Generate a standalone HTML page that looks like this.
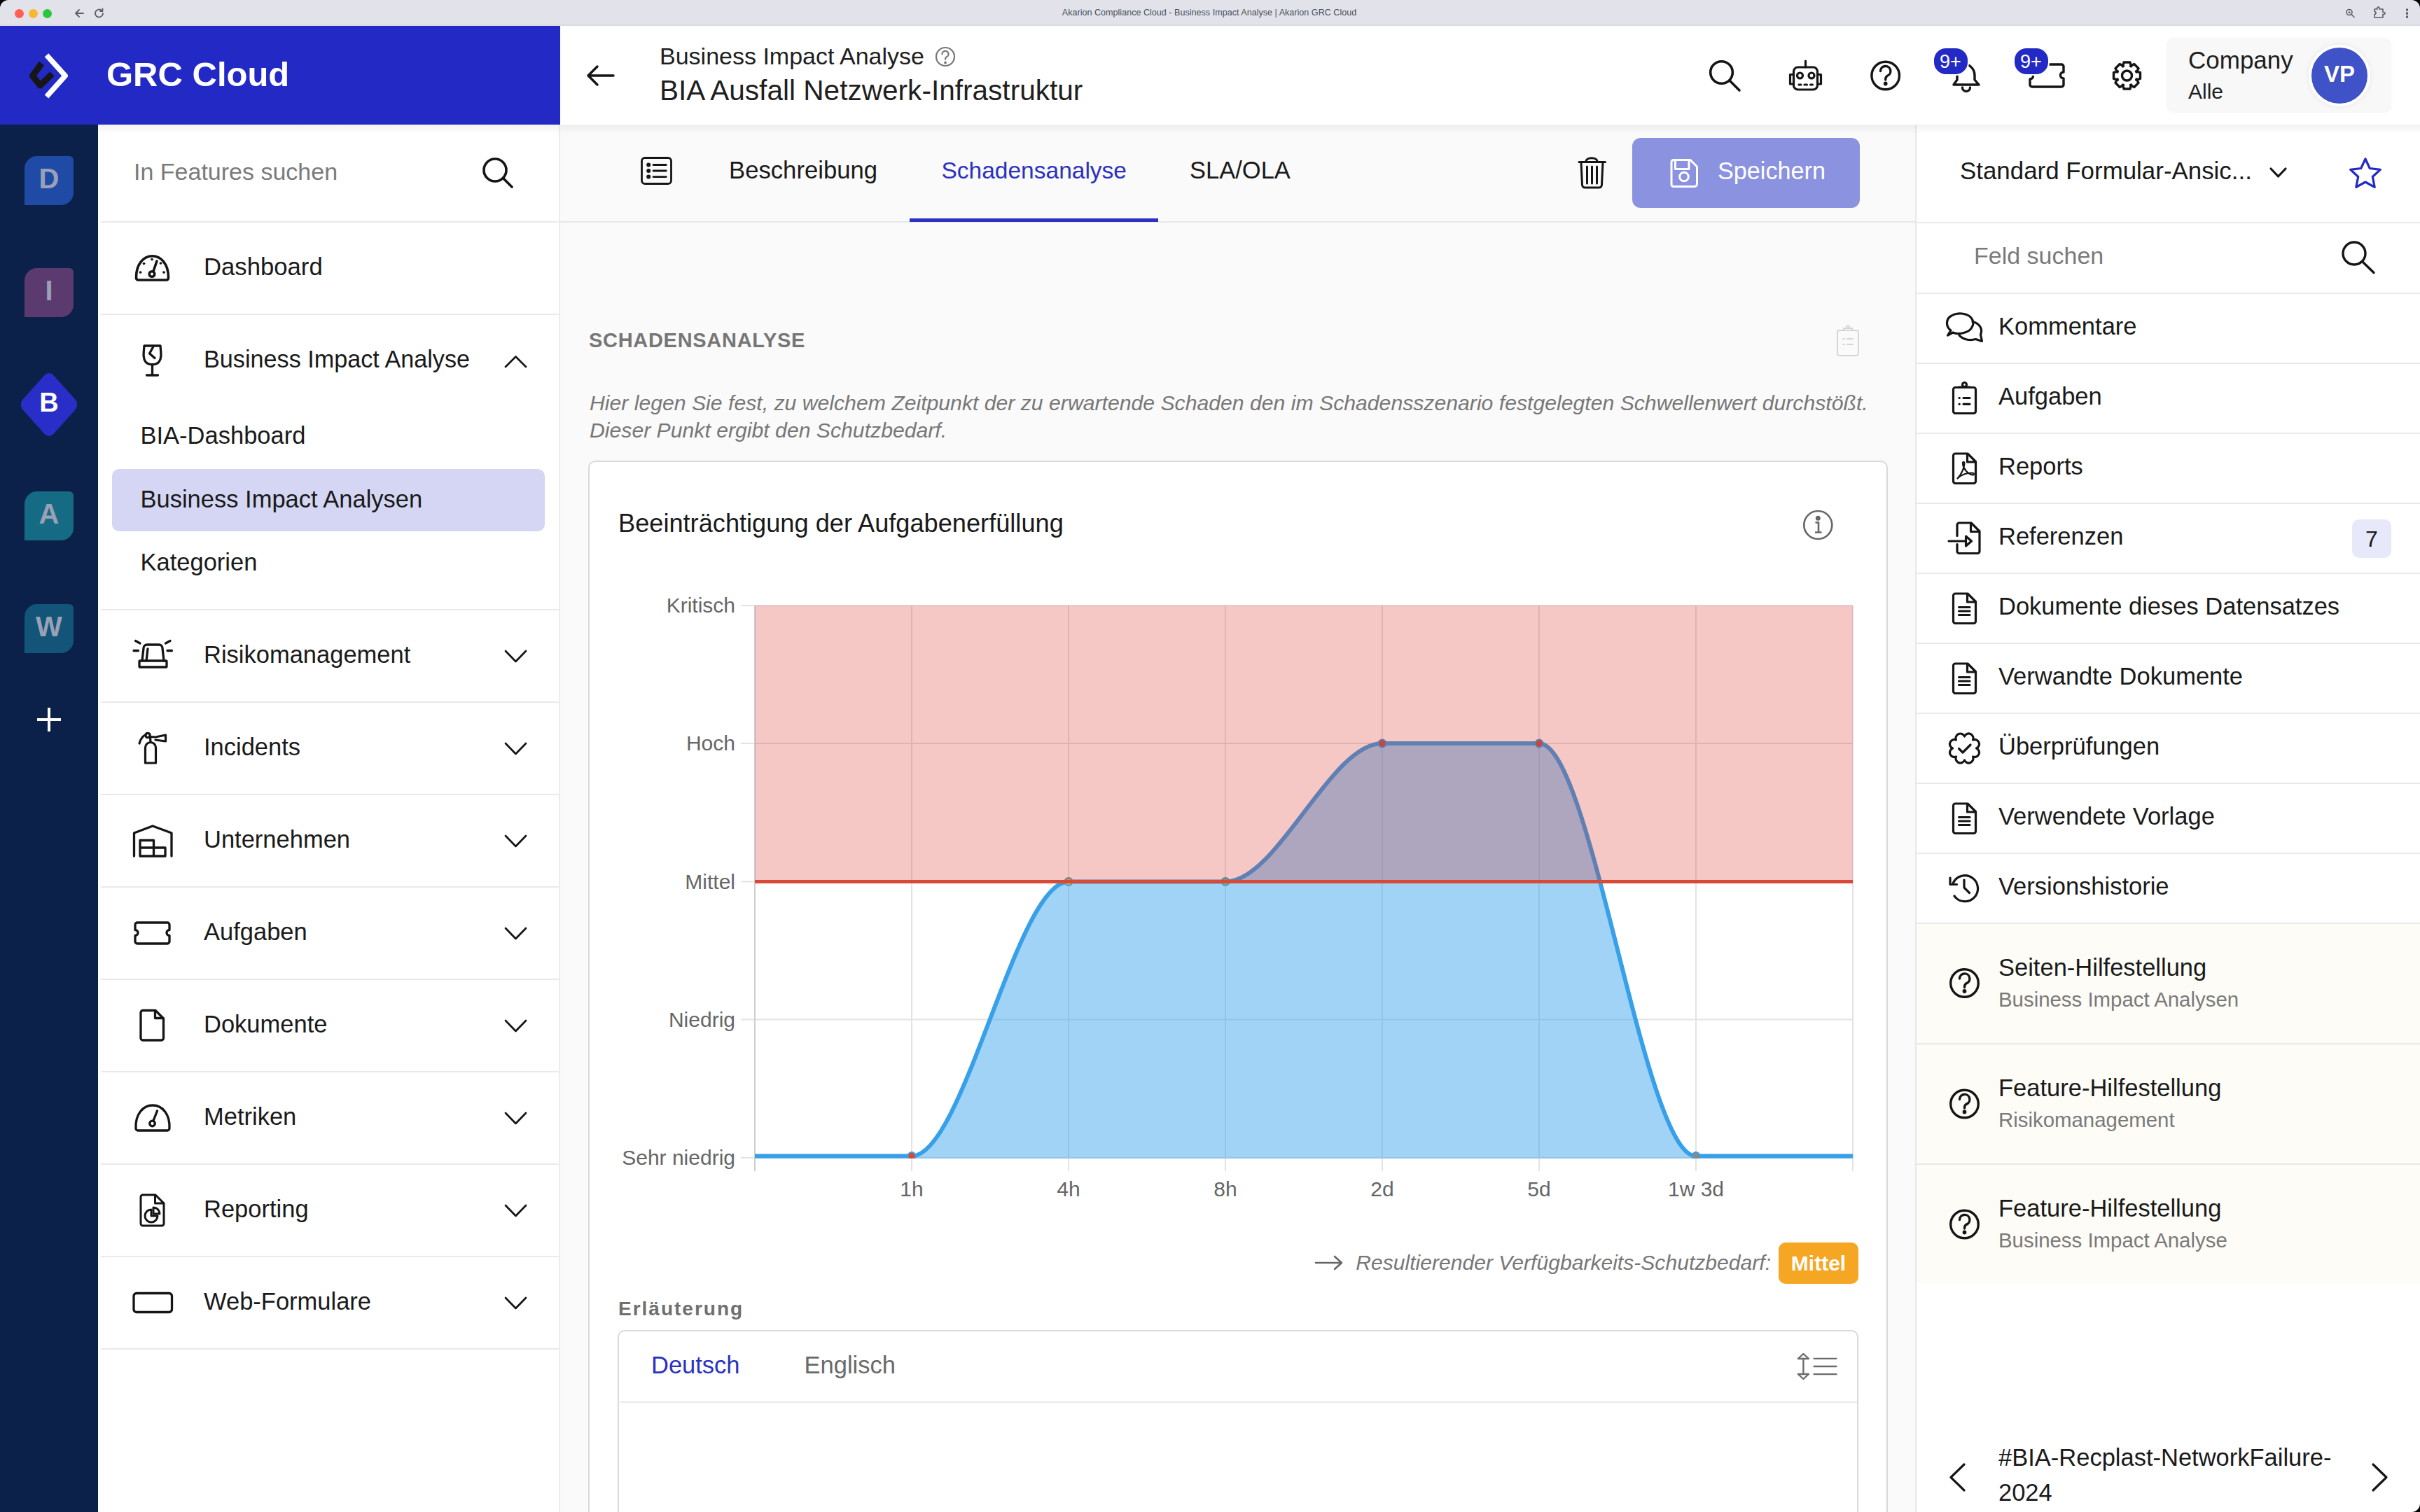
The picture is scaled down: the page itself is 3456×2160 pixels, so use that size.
<!DOCTYPE html>
<html><head><meta charset="utf-8"><title>GRC Cloud</title>
<style>
html,body{margin:0;padding:0;width:3456px;height:2160px;overflow:hidden;background:#f8f8f8;}
body{position:relative;font-family:"Liberation Sans",sans-serif;}
svg{display:block}
</style></head><body>
<div style="position:absolute;left:0px;top:0px;width:3456px;height:35px;background:#e2e3ea;"></div>
<div style="position:absolute;left:0px;top:35px;width:3456px;height:2px;background:#d9dae2;"></div>
<div style="position:absolute;left:20.5px;top:12.5px;width:13px;height:13px;border-radius:50%;background:#fe5f57"></div>
<div style="position:absolute;left:40.5px;top:12.5px;width:13px;height:13px;border-radius:50%;background:#f7b731"></div>
<div style="position:absolute;left:60.5px;top:12.5px;width:13px;height:13px;border-radius:50%;background:#2ac640"></div>
<div style="position:absolute;left:1427.0px;width:600px;text-align:center;top:12.3px;font-size:12.6px;line-height:1;color:#4b4e58;font-weight:400;font-style:normal;letter-spacing:0px;white-space:nowrap;">Akarion Compliance Cloud - Business Impact Analyse | Akarion GRC Cloud</div>
<div style="position:absolute;left:0px;top:37px;width:800px;height:141px;background:#2329c5;"></div>
<div style="position:absolute;left:152.0px;top:81.5px;font-size:49px;line-height:1;color:#ffffff;font-weight:700;font-style:normal;letter-spacing:0px;white-space:nowrap;">GRC Cloud</div>
<div style="position:absolute;left:800px;top:37px;width:2656px;height:141px;background:#ffffff;"></div>
<div style="position:absolute;left:942.0px;top:63.2px;font-size:34px;line-height:1;color:#1f1f1f;font-weight:400;font-style:normal;letter-spacing:0px;white-space:nowrap;">Business Impact Analyse</div>
<div style="position:absolute;left:942.0px;top:108.6px;font-size:40.6px;line-height:1;color:#1f1f1f;font-weight:400;font-style:normal;letter-spacing:0px;white-space:nowrap;">BIA Ausfall Netzwerk-Infrastruktur</div>
<div style="position:absolute;left:3094px;top:54px;width:321px;height:107px;background:#f8f8f9;border-radius:10px;box-shadow:0 0 5px rgba(0,0,0,0.025);"></div>
<div style="position:absolute;left:3125.0px;top:67.9px;font-size:35px;line-height:1;color:#1f1f1f;font-weight:400;font-style:normal;letter-spacing:0px;white-space:nowrap;">Company</div>
<div style="position:absolute;left:3125.0px;top:115.6px;font-size:30px;line-height:1;color:#1f1f1f;font-weight:400;font-style:normal;letter-spacing:0px;white-space:nowrap;">Alle</div>
<div style="position:absolute;left:3297px;top:64px;width:88px;height:88px;border-radius:50%;background:#3f52c7;border:4px solid #fff;box-sizing:border-box;box-shadow:0 0 8px rgba(0,0,0,0.07)"></div>
<div style="position:absolute;left:3041.0px;width:600px;text-align:center;top:89.1px;font-size:33px;line-height:1;color:#ffffff;font-weight:700;font-style:normal;letter-spacing:0px;white-space:nowrap;">VP</div>
<div style="position:absolute;left:0px;top:178px;width:140px;height:1982px;background:#0b214a;"></div>
<div style="position:absolute;left:140px;top:178px;width:660px;height:1982px;background:#ffffff;"></div>
<div style="position:absolute;left:798px;top:178px;width:2px;height:1982px;background:#ececee;"></div>
<div style="position:absolute;left:191.0px;top:228.2px;font-size:34px;line-height:1;color:#7a7a7a;font-weight:400;font-style:normal;letter-spacing:0px;white-space:nowrap;">In Features suchen</div>
<div style="position:absolute;left:144px;top:316px;width:654px;height:2px;background:#e9e9ea;"></div>
<div style="position:absolute;left:144px;top:448px;width:654px;height:2px;background:#e9e9ea;"></div>
<div style="position:absolute;left:144px;top:870px;width:654px;height:2px;background:#e9e9ea;"></div>
<div style="position:absolute;left:144px;top:1002px;width:654px;height:2px;background:#e9e9ea;"></div>
<div style="position:absolute;left:144px;top:1134px;width:654px;height:2px;background:#e9e9ea;"></div>
<div style="position:absolute;left:144px;top:1266px;width:654px;height:2px;background:#e9e9ea;"></div>
<div style="position:absolute;left:144px;top:1398px;width:654px;height:2px;background:#e9e9ea;"></div>
<div style="position:absolute;left:144px;top:1530px;width:654px;height:2px;background:#e9e9ea;"></div>
<div style="position:absolute;left:144px;top:1662px;width:654px;height:2px;background:#e9e9ea;"></div>
<div style="position:absolute;left:144px;top:1794px;width:654px;height:2px;background:#e9e9ea;"></div>
<div style="position:absolute;left:144px;top:1926px;width:654px;height:2px;background:#e9e9ea;"></div>
<div style="position:absolute;left:291.0px;top:363.6px;font-size:34.7px;line-height:1;color:#1a1a1a;font-weight:400;font-style:normal;letter-spacing:0px;white-space:nowrap;">Dashboard</div>
<div style="position:absolute;left:291.0px;top:496.0px;font-size:34.2px;line-height:1;color:#1a1a1a;font-weight:400;font-style:normal;letter-spacing:0px;white-space:nowrap;">Business Impact Analyse</div>
<div style="position:absolute;left:200.5px;top:604.8px;font-size:34.5px;line-height:1;color:#1a1a1a;font-weight:400;font-style:normal;letter-spacing:0px;white-space:nowrap;">BIA-Dashboard</div>
<div style="position:absolute;left:160px;top:670px;width:618px;height:89px;background:#d4d6f4;border-radius:10px;"></div>
<div style="position:absolute;left:200.5px;top:695.8px;font-size:34.5px;line-height:1;color:#1a1a1a;font-weight:400;font-style:normal;letter-spacing:0px;white-space:nowrap;">Business Impact Analysen</div>
<div style="position:absolute;left:200.5px;top:785.8px;font-size:34.5px;line-height:1;color:#1a1a1a;font-weight:400;font-style:normal;letter-spacing:0px;white-space:nowrap;">Kategorien</div>
<div style="position:absolute;left:291.0px;top:917.8px;font-size:34.5px;line-height:1;color:#1a1a1a;font-weight:400;font-style:normal;letter-spacing:0px;white-space:nowrap;">Risikomanagement</div>
<div style="position:absolute;left:291.0px;top:1049.8px;font-size:34.5px;line-height:1;color:#1a1a1a;font-weight:400;font-style:normal;letter-spacing:0px;white-space:nowrap;">Incidents</div>
<div style="position:absolute;left:291.0px;top:1181.8px;font-size:34.5px;line-height:1;color:#1a1a1a;font-weight:400;font-style:normal;letter-spacing:0px;white-space:nowrap;">Unternehmen</div>
<div style="position:absolute;left:291.0px;top:1313.8px;font-size:34.5px;line-height:1;color:#1a1a1a;font-weight:400;font-style:normal;letter-spacing:0px;white-space:nowrap;">Aufgaben</div>
<div style="position:absolute;left:291.0px;top:1445.8px;font-size:34.5px;line-height:1;color:#1a1a1a;font-weight:400;font-style:normal;letter-spacing:0px;white-space:nowrap;">Dokumente</div>
<div style="position:absolute;left:291.0px;top:1577.8px;font-size:34.5px;line-height:1;color:#1a1a1a;font-weight:400;font-style:normal;letter-spacing:0px;white-space:nowrap;">Metriken</div>
<div style="position:absolute;left:291.0px;top:1709.8px;font-size:34.5px;line-height:1;color:#1a1a1a;font-weight:400;font-style:normal;letter-spacing:0px;white-space:nowrap;">Reporting</div>
<div style="position:absolute;left:291.0px;top:1841.8px;font-size:34.5px;line-height:1;color:#1a1a1a;font-weight:400;font-style:normal;letter-spacing:0px;white-space:nowrap;">Web-Formulare</div>
<div style="position:absolute;left:800px;top:178px;width:1937px;height:1982px;background:#fafafa;"></div>
<div style="position:absolute;left:800px;top:316px;width:1937px;height:2px;background:#e6e7ea;"></div>
<div style="position:absolute;left:1041.0px;top:225.6px;font-size:34.7px;line-height:1;color:#1a1a1a;font-weight:400;font-style:normal;letter-spacing:0px;white-space:nowrap;">Beschreibung</div>
<div style="position:absolute;left:1344.5px;top:226.6px;font-size:33.5px;line-height:1;color:#2b31c0;font-weight:400;font-style:normal;letter-spacing:0px;white-space:nowrap;">Schadensanalyse</div>
<div style="position:absolute;left:1699.0px;top:225.8px;font-size:34.5px;line-height:1;color:#1a1a1a;font-weight:400;font-style:normal;letter-spacing:0px;white-space:nowrap;">SLA/OLA</div>
<div style="position:absolute;left:1299px;top:312px;width:355px;height:5px;background:#2b31c0;"></div>
<div style="position:absolute;left:2331px;top:197px;width:325px;height:100px;background:#8b92e0;border-radius:12px;"></div>
<div style="position:absolute;left:2453.0px;top:227.0px;font-size:34.2px;line-height:1;color:#ffffff;font-weight:400;font-style:normal;letter-spacing:0px;white-space:nowrap;">Speichern</div>
<div style="position:absolute;left:841.0px;top:471.5px;font-size:29px;line-height:1;color:#767676;font-weight:700;font-style:normal;letter-spacing:0.7px;white-space:nowrap;">SCHADENSANALYSE</div>
<div style="position:absolute;left:842.0px;top:561.4px;font-size:30.2px;line-height:1;color:#777777;font-weight:400;font-style:italic;letter-spacing:0px;white-space:nowrap;">Hier legen Sie fest, zu welchem Zeitpunkt der zu erwartende Schaden den im Schadensszenario festgelegten Schwellenwert durchstößt.</div>
<div style="position:absolute;left:842.0px;top:600.4px;font-size:30.2px;line-height:1;color:#777777;font-weight:400;font-style:italic;letter-spacing:0px;white-space:nowrap;">Dieser Punkt ergibt den Schutzbedarf.</div>
<div style="position:absolute;left:840px;top:658px;width:1856px;height:1600px;background:#fff;border:2px solid #d9d9d9;border-radius:10px;box-sizing:border-box"></div>
<div style="position:absolute;left:883.0px;top:730.4px;font-size:36.2px;line-height:1;color:#1a1a1a;font-weight:400;font-style:normal;letter-spacing:0px;white-space:nowrap;">Beeinträchtigung der Aufgabenerfüllung</div>
<div style="position:absolute;right:927.0px;top:1788.5px;font-size:30.1px;line-height:1;color:#777777;font-weight:400;font-style:italic;letter-spacing:0px;white-space:nowrap;">Resultierender Verfügbarkeits-Schutzbedarf:</div>
<div style="position:absolute;left:2540px;top:1775px;width:114px;height:59px;background:#f5a623;border-radius:10px;"></div>
<div style="position:absolute;left:2297.0px;width:600px;text-align:center;top:1789.6px;font-size:30px;line-height:1;color:#ffffff;font-weight:700;font-style:normal;letter-spacing:0px;white-space:nowrap;">Mittel</div>
<div style="position:absolute;left:883.0px;top:1856.3px;font-size:28px;line-height:1;color:#6f6f6f;font-weight:700;font-style:normal;letter-spacing:2.0px;white-space:nowrap;">Erläuterung</div>
<div style="position:absolute;left:882px;top:1900px;width:1772px;height:400px;background:#fff;border:2px solid #d9d9d9;border-radius:10px;box-sizing:border-box"></div>
<div style="position:absolute;left:885px;top:2002px;width:1767px;height:2px;background:#ebebeb;"></div>
<div style="position:absolute;left:930.0px;top:1932.8px;font-size:34.5px;line-height:1;color:#2b31c0;font-weight:400;font-style:normal;letter-spacing:0px;white-space:nowrap;">Deutsch</div>
<div style="position:absolute;left:1148.5px;top:1932.8px;font-size:34.5px;line-height:1;color:#6a6a6a;font-weight:400;font-style:normal;letter-spacing:0px;white-space:nowrap;">Englisch</div>
<div style="position:absolute;left:2737px;top:178px;width:719px;height:1982px;background:#ffffff;"></div>
<div style="position:absolute;left:2735px;top:178px;width:2px;height:1982px;background:#e8e8ea;"></div>
<div style="position:absolute;left:2799.0px;top:226.5px;font-size:34.9px;line-height:1;color:#1a1a1a;font-weight:400;font-style:normal;letter-spacing:0px;white-space:nowrap;">Standard Formular-Ansic...</div>
<div style="position:absolute;left:2819.0px;top:348.2px;font-size:34px;line-height:1;color:#7a7a7a;font-weight:400;font-style:normal;letter-spacing:0px;white-space:nowrap;">Feld suchen</div>
<div style="position:absolute;left:2737px;top:317px;width:719px;height:2px;background:#e9e9ea;"></div>
<div style="position:absolute;left:2737px;top:418px;width:719px;height:2px;background:#e9e9ea;"></div>
<div style="position:absolute;left:2737px;top:518px;width:719px;height:2px;background:#e9e9ea;"></div>
<div style="position:absolute;left:2737px;top:618px;width:719px;height:2px;background:#e9e9ea;"></div>
<div style="position:absolute;left:2737px;top:718px;width:719px;height:2px;background:#e9e9ea;"></div>
<div style="position:absolute;left:2737px;top:818px;width:719px;height:2px;background:#e9e9ea;"></div>
<div style="position:absolute;left:2737px;top:918px;width:719px;height:2px;background:#e9e9ea;"></div>
<div style="position:absolute;left:2737px;top:1018px;width:719px;height:2px;background:#e9e9ea;"></div>
<div style="position:absolute;left:2737px;top:1118px;width:719px;height:2px;background:#e9e9ea;"></div>
<div style="position:absolute;left:2737px;top:1218px;width:719px;height:2px;background:#e9e9ea;"></div>
<div style="position:absolute;left:2737px;top:1318px;width:719px;height:2px;background:#e9e9ea;"></div>
<div style="position:absolute;left:2854.0px;top:448.8px;font-size:34.5px;line-height:1;color:#1a1a1a;font-weight:400;font-style:normal;letter-spacing:0px;white-space:nowrap;">Kommentare</div>
<div style="position:absolute;left:2854.0px;top:548.8px;font-size:34.5px;line-height:1;color:#1a1a1a;font-weight:400;font-style:normal;letter-spacing:0px;white-space:nowrap;">Aufgaben</div>
<div style="position:absolute;left:2854.0px;top:648.8px;font-size:34.5px;line-height:1;color:#1a1a1a;font-weight:400;font-style:normal;letter-spacing:0px;white-space:nowrap;">Reports</div>
<div style="position:absolute;left:2854.0px;top:748.8px;font-size:34.5px;line-height:1;color:#1a1a1a;font-weight:400;font-style:normal;letter-spacing:0px;white-space:nowrap;">Referenzen</div>
<div style="position:absolute;left:2854.0px;top:848.8px;font-size:34.5px;line-height:1;color:#1a1a1a;font-weight:400;font-style:normal;letter-spacing:0px;white-space:nowrap;">Dokumente dieses Datensatzes</div>
<div style="position:absolute;left:2854.0px;top:948.8px;font-size:34.5px;line-height:1;color:#1a1a1a;font-weight:400;font-style:normal;letter-spacing:0px;white-space:nowrap;">Verwandte Dokumente</div>
<div style="position:absolute;left:2854.0px;top:1048.8px;font-size:34.5px;line-height:1;color:#1a1a1a;font-weight:400;font-style:normal;letter-spacing:0px;white-space:nowrap;">Überprüfungen</div>
<div style="position:absolute;left:2854.0px;top:1148.8px;font-size:34.5px;line-height:1;color:#1a1a1a;font-weight:400;font-style:normal;letter-spacing:0px;white-space:nowrap;">Verwendete Vorlage</div>
<div style="position:absolute;left:2854.0px;top:1248.8px;font-size:34.5px;line-height:1;color:#1a1a1a;font-weight:400;font-style:normal;letter-spacing:0px;white-space:nowrap;">Versionshistorie</div>
<div style="position:absolute;left:3359px;top:742px;width:56px;height:55px;background:#e7e8f9;border-radius:10px;"></div>
<div style="position:absolute;left:3087.0px;width:600px;text-align:center;top:753.9px;font-size:32px;line-height:1;color:#1a1a1a;font-weight:400;font-style:normal;letter-spacing:0px;white-space:nowrap;">7</div>
<div style="position:absolute;left:2737px;top:1320px;width:719px;height:513px;background:#fdfcf7;"></div>
<div style="position:absolute;left:2737px;top:1490px;width:719px;height:2px;background:#e9e9ea;"></div>
<div style="position:absolute;left:2737px;top:1662px;width:719px;height:2px;background:#e9e9ea;"></div>
<div style="position:absolute;left:2854.0px;top:1364.8px;font-size:34.5px;line-height:1;color:#1a1a1a;font-weight:400;font-style:normal;letter-spacing:0px;white-space:nowrap;">Seiten-Hilfestellung</div>
<div style="position:absolute;left:2854.0px;top:1413.1px;font-size:29.4px;line-height:1;color:#7a7a7a;font-weight:400;font-style:normal;letter-spacing:0px;white-space:nowrap;">Business Impact Analysen</div>
<div style="position:absolute;left:2854.0px;top:1537.1px;font-size:34.5px;line-height:1;color:#1a1a1a;font-weight:400;font-style:normal;letter-spacing:0px;white-space:nowrap;">Feature-Hilfestellung</div>
<div style="position:absolute;left:2854.0px;top:1585.1px;font-size:29.4px;line-height:1;color:#7a7a7a;font-weight:400;font-style:normal;letter-spacing:0px;white-space:nowrap;">Risikomanagement</div>
<div style="position:absolute;left:2854.0px;top:1709.4px;font-size:34.5px;line-height:1;color:#1a1a1a;font-weight:400;font-style:normal;letter-spacing:0px;white-space:nowrap;">Feature-Hilfestellung</div>
<div style="position:absolute;left:2854.0px;top:1757.1px;font-size:29.4px;line-height:1;color:#7a7a7a;font-weight:400;font-style:normal;letter-spacing:0px;white-space:nowrap;">Business Impact Analyse</div>
<div style="position:absolute;left:2854.0px;top:2064.8px;font-size:34.5px;line-height:1;color:#1a1a1a;font-weight:400;font-style:normal;letter-spacing:0px;white-space:nowrap;">#BIA-Recplast-NetworkFailure-</div>
<div style="position:absolute;left:2854.0px;top:2114.8px;font-size:34.5px;line-height:1;color:#1a1a1a;font-weight:400;font-style:normal;letter-spacing:0px;white-space:nowrap;">2024</div>
<svg style="position:absolute;left:1000px;top:820px;" width="1700" height="900" viewBox="1000 820 1700 900" fill="none"><line x1="1058" y1="865" x2="2646" y2="865" stroke="#e3e3e3" stroke-width="2"/><line x1="1058" y1="1062" x2="2646" y2="1062" stroke="#e3e3e3" stroke-width="2"/><line x1="1058" y1="1259.5" x2="2646" y2="1259.5" stroke="#e3e3e3" stroke-width="2"/><line x1="1058" y1="1456.5" x2="2646" y2="1456.5" stroke="#e3e3e3" stroke-width="2"/><line x1="1058" y1="1654" x2="2646" y2="1654" stroke="#e3e3e3" stroke-width="2"/><line x1="1078" y1="865" x2="1078" y2="1673" stroke="#e3e3e3" stroke-width="2"/><line x1="1302" y1="865" x2="1302" y2="1673" stroke="#e3e3e3" stroke-width="2"/><line x1="1526" y1="865" x2="1526" y2="1673" stroke="#e3e3e3" stroke-width="2"/><line x1="1750" y1="865" x2="1750" y2="1673" stroke="#e3e3e3" stroke-width="2"/><line x1="1974" y1="865" x2="1974" y2="1673" stroke="#e3e3e3" stroke-width="2"/><line x1="2198" y1="865" x2="2198" y2="1673" stroke="#e3e3e3" stroke-width="2"/><line x1="2422" y1="865" x2="2422" y2="1673" stroke="#e3e3e3" stroke-width="2"/><line x1="2646" y1="865" x2="2646" y2="1673" stroke="#e3e3e3" stroke-width="2"/><line x1="1078" y1="865" x2="1078" y2="1673" stroke="#cfcfcf" stroke-width="2"/><clipPath id="cc"><rect x="1000" y="820" width="1700" height="835"/></clipPath><g clip-path="url(#cc)"><path d="M1078,1651.5 L1302,1651.5 C1376.7,1651.5 1451.3,1259.5 1526,1259.5 L1750,1259.5 C1824.7,1259.5 1899.3,1062 1974,1062 L2198,1062 C2272.7,1062 2347.3,1651.5 2422,1651.5 L2646,1651.5 L2646,1655 L1078,1655 Z" fill="rgba(54,162,235,0.47)"/><path d="M1078,1651.5 L1302,1651.5 C1376.7,1651.5 1451.3,1259.5 1526,1259.5 L1750,1259.5 C1824.7,1259.5 1899.3,1062 1974,1062 L2198,1062 C2272.7,1062 2347.3,1651.5 2422,1651.5 L2646,1651.5" stroke="#37a0e8" stroke-width="6" fill="none"/><circle cx="1302" cy="1651.5" r="5.5" fill="#e0452e" stroke="#37a0e8" stroke-width="2"/><circle cx="1526" cy="1259.5" r="5.5" fill="#f5a623" stroke="#37a0e8" stroke-width="2"/><circle cx="1750" cy="1259.5" r="5.5" fill="#8bb63a" stroke="#37a0e8" stroke-width="2"/><circle cx="1974" cy="1062" r="5.5" fill="#c0504d" stroke="#37a0e8" stroke-width="2"/><circle cx="2198" cy="1062" r="5.5" fill="#c0504d" stroke="#37a0e8" stroke-width="2"/><circle cx="2422" cy="1651.5" r="5.5" fill="#888" stroke="#37a0e8" stroke-width="2"/></g><rect x="1078" y="865" width="1568" height="394.5" fill="rgba(215,40,30,0.26)"/><line x1="1078" y1="1259.5" x2="2646" y2="1259.5" stroke="#d84a35" stroke-width="5"/></svg>
<div style="position:absolute;right:2406.0px;top:850.1px;font-size:30px;line-height:1;color:#666666;font-weight:400;font-style:normal;letter-spacing:0px;white-space:nowrap;">Kritisch</div>
<div style="position:absolute;right:2406.0px;top:1047.1px;font-size:30px;line-height:1;color:#666666;font-weight:400;font-style:normal;letter-spacing:0px;white-space:nowrap;">Hoch</div>
<div style="position:absolute;right:2406.0px;top:1244.6px;font-size:30px;line-height:1;color:#666666;font-weight:400;font-style:normal;letter-spacing:0px;white-space:nowrap;">Mittel</div>
<div style="position:absolute;right:2406.0px;top:1441.6px;font-size:30px;line-height:1;color:#666666;font-weight:400;font-style:normal;letter-spacing:0px;white-space:nowrap;">Niedrig</div>
<div style="position:absolute;right:2406.0px;top:1639.1px;font-size:30px;line-height:1;color:#666666;font-weight:400;font-style:normal;letter-spacing:0px;white-space:nowrap;">Sehr niedrig</div>
<div style="position:absolute;left:1002.0px;width:600px;text-align:center;top:1683.6px;font-size:30px;line-height:1;color:#666666;font-weight:400;font-style:normal;letter-spacing:0px;white-space:nowrap;">1h</div>
<div style="position:absolute;left:1226.0px;width:600px;text-align:center;top:1683.6px;font-size:30px;line-height:1;color:#666666;font-weight:400;font-style:normal;letter-spacing:0px;white-space:nowrap;">4h</div>
<div style="position:absolute;left:1450.0px;width:600px;text-align:center;top:1683.6px;font-size:30px;line-height:1;color:#666666;font-weight:400;font-style:normal;letter-spacing:0px;white-space:nowrap;">8h</div>
<div style="position:absolute;left:1674.0px;width:600px;text-align:center;top:1683.6px;font-size:30px;line-height:1;color:#666666;font-weight:400;font-style:normal;letter-spacing:0px;white-space:nowrap;">2d</div>
<div style="position:absolute;left:1898.0px;width:600px;text-align:center;top:1683.6px;font-size:30px;line-height:1;color:#666666;font-weight:400;font-style:normal;letter-spacing:0px;white-space:nowrap;">5d</div>
<div style="position:absolute;left:2122.0px;width:600px;text-align:center;top:1683.6px;font-size:30px;line-height:1;color:#666666;font-weight:400;font-style:normal;letter-spacing:0px;white-space:nowrap;">1w 3d</div>
<div style="position:absolute;left:140px;top:178px;width:3316px;height:14px;background:linear-gradient(rgba(0,0,0,0.05),rgba(0,0,0,0));"></div>
<div style="position:absolute;left:-40px;top:-40px;width:3536px;height:2240px;border:40px solid #000;border-radius:52px 52px 52px 40px;box-sizing:border-box;pointer-events:none"></div>
<svg style="position:absolute;left:100px;top:8px;overflow:visible" width="60" height="24" viewBox="100 8 60 24" fill="none" stroke="#5a5d68" stroke-width="1.8" stroke-linecap="round" stroke-linejoin="round"><path d="M119,19 H108 M113,14 L108,19 L113,24"/></svg>
<svg style="position:absolute;left:130px;top:8px;overflow:visible" width="24" height="24" viewBox="130 8 24 24" fill="none" stroke="#5a5d68" stroke-width="1.8" stroke-linecap="round" stroke-linejoin="round"><path d="M147,19 A5.5,5.5 0 1 1 145.4,15.1"/><path d="M146.5,12.5 V16 H143"/></svg>
<svg style="position:absolute;left:3340px;top:8px;overflow:visible" width="30" height="24" viewBox="3340 8 30 24" fill="none" stroke="#5a5d68" stroke-width="1.6" stroke-linecap="round" stroke-linejoin="round"><circle cx="3355" cy="17.5" r="4"/><path d="M3358,20.5 L3362,24.5"/><path d="M3355,15.8 V19.2 M3353.3,17.5 H3356.7" stroke-width="1"/></svg>
<svg style="position:absolute;left:3385px;top:6px;overflow:visible" width="26" height="24" viewBox="3385 6 26 24" fill="none" stroke="#5a5d68" stroke-width="1.6" stroke-linecap="round" stroke-linejoin="round"><path d="M3391,13 H3395 V11.5 A1.5,1.5 0 0 1 3398,11.5 V13 H3403 V17.5 H3404.5 A1.5,1.5 0 0 1 3404.5,20.5 H3403 V25 H3391 V20.5 A2,2 0 0 0 3391,16.5 Z"/></svg>
<div style="position:absolute;left:3435.5px;top:12px;width:3.5px;height:3.5px;border-radius:50%;background:#5a5d68;box-shadow:0 5px 0 #5a5d68,0 10px 0 #5a5d68"></div>
<svg style="position:absolute;left:30px;top:60px;overflow:visible" width="80" height="100" viewBox="30 60 80 100" fill="none" stroke="#151515" stroke-width="4" stroke-linecap="round" stroke-linejoin="round"><path d="M66.5,78.7 L93.2,108.3 L66.5,137.9" stroke="#ffffff" stroke-width="7.5" stroke-linecap="butt" stroke-linejoin="round"/><path d="M59.5,90.5 L46.4,108.3 L57.3,122 L74.5,105.5" stroke="#161616" stroke-width="9" stroke-linecap="butt" stroke-linejoin="round"/></svg>
<svg style="position:absolute;left:830px;top:85px;overflow:visible" width="60" height="50" viewBox="830 85 60 50" fill="none" stroke="#151515" stroke-width="3.5" stroke-linecap="round" stroke-linejoin="round"><path d="M876,108 H840 M853,95 L840,108 L853,121"/></svg>
<svg style="position:absolute;left:1330px;top:60px;overflow:visible" width="40" height="45" viewBox="1330 60 40 45" fill="none" stroke="#777777" stroke-width="2.2" stroke-linecap="round" stroke-linejoin="round"><circle cx="1350" cy="81" r="13"/><path d="M1345.5,77.5 A4.5,4.5 0 1 1 1351.5,81.5 C1350.3,82.3 1350,83 1350,85"/><circle cx="1350" cy="89.5" r="0.8" fill="#777"/></svg>
<svg style="position:absolute;left:0px;top:0px;overflow:visible" width="3456" height="2160" viewBox="0 0 3456 2160" fill="none" stroke="#151515" stroke-width="3.6" stroke-linecap="round" stroke-linejoin="round"><circle cx="2458.5" cy="103.5" r="15.8"/><path d="M2470,115 L2484,129"/></svg>
<svg style="position:absolute;left:0px;top:0px;overflow:visible" width="3456" height="2160" viewBox="0 0 3456 2160" fill="none" stroke="#151515" stroke-width="3.2" stroke-linecap="round" stroke-linejoin="round"><rect x="2561.5" y="96" width="34" height="32" rx="6"/><path d="M2578.5,96 V87"/><path d="M2561,106.5 H2556.5 V120 H2561 M2596,106.5 H2600.5 V120 H2596"/><circle cx="2570.5" cy="108" r="4"/><circle cx="2587" cy="108" r="4"/><path d="M2569,121 H2572 M2577,121 H2580.5 M2585.5,121 H2588.5"/></svg>
<svg style="position:absolute;left:0px;top:0px;overflow:visible" width="3456" height="2160" viewBox="0 0 3456 2160" fill="none" stroke="#151515" stroke-width="3.4" stroke-linecap="round" stroke-linejoin="round"><circle cx="2692.7" cy="108" r="19.8"/><path d="M2685.5,101.5 A7.2,7.2 0 1 1 2695,108.5 C2693.2,109.6 2692.7,111 2692.7,114"/><circle cx="2692.7" cy="119.5" r="1.2" fill="#151515"/></svg>
<svg style="position:absolute;left:0px;top:0px;overflow:visible" width="3456" height="2160" viewBox="0 0 3456 2160" fill="none" stroke="#151515" stroke-width="3.4" stroke-linecap="round" stroke-linejoin="round"><path d="M2795,92 C2812,88 2820,98 2820,108 V114 L2826,121 H2790 L2795,114 V108"/><path d="M2802.5,125 A5.5,5.5 0 0 0 2813.5,125"/></svg>
<svg style="position:absolute;left:0px;top:0px;overflow:visible" width="3456" height="2160" viewBox="0 0 3456 2160" fill="none" stroke="#151515" stroke-width="3.4" stroke-linecap="round" stroke-linejoin="round"><path d="M2899,92 H2944 A3,3 0 0 1 2947,95 V103 A4.5,4.5 0 0 0 2947,112 V121 A3,3 0 0 1 2944,124 H2902 A3,3 0 0 1 2899,121 V113 A4.5,4.5 0 0 0 2899,104 Z"/></svg>
<div style="position:absolute;left:2761.5px;top:69px;width:48px;height:37px;border-radius:19px;background:#2329c5;border:2px solid #fff;box-sizing:content-box;margin:-2px"></div>
<div style="position:absolute;left:2485.5px;width:600px;text-align:center;top:75.1px;font-size:27px;line-height:1;color:#ffffff;font-weight:400;font-style:normal;letter-spacing:0px;white-space:nowrap;">9+</div>
<div style="position:absolute;left:2876.5px;top:69px;width:48px;height:37px;border-radius:19px;background:#2329c5;border:2px solid #fff;box-sizing:content-box;margin:-2px"></div>
<div style="position:absolute;left:2600.5px;width:600px;text-align:center;top:75.1px;font-size:27px;line-height:1;color:#ffffff;font-weight:400;font-style:normal;letter-spacing:0px;white-space:nowrap;">9+</div>
<svg style="position:absolute;left:0px;top:0px;overflow:visible" width="3456" height="2160" viewBox="0 0 3456 2160" fill="none" stroke="#151515" stroke-width="3.4" stroke-linecap="round" stroke-linejoin="round"><path d="M3050.6,101.9 L3056.5,103.6 L3056.5,112.4 L3050.6,114.1 L3051.1,113.0 L3054.0,118.3 L3047.8,124.5 L3042.5,121.6 L3043.6,121.1 L3041.9,127.0 L3033.1,127.0 L3031.4,121.1 L3032.5,121.6 L3027.2,124.5 L3021.0,118.3 L3023.9,113.0 L3024.4,114.1 L3018.5,112.4 L3018.5,103.6 L3024.4,101.9 L3023.9,103.0 L3021.0,97.7 L3027.2,91.5 L3032.5,94.4 L3031.4,94.9 L3033.1,89.0 L3041.9,89.0 L3043.6,94.9 L3042.5,94.4 L3047.8,91.5 L3054.0,97.7 L3051.1,103.0 Z"/><circle cx="3037.5" cy="108" r="7"/></svg>
<div style="position:absolute;left:35px;top:223px;width:70px;height:70px;background:#1f4ba7;border-radius:18px 6px 18px 0"></div>
<div style="position:absolute;left:-230.0px;width:600px;text-align:center;top:234.6px;font-size:40px;line-height:1;color:#9aa0b6;font-weight:700;font-style:normal;letter-spacing:0px;white-space:nowrap;">D</div>
<div style="position:absolute;left:35px;top:383px;width:70px;height:70px;background:#5b3b6f;border-radius:18px 6px 18px 0"></div>
<div style="position:absolute;left:-230.0px;width:600px;text-align:center;top:394.6px;font-size:40px;line-height:1;color:#9aa0b6;font-weight:700;font-style:normal;letter-spacing:0px;white-space:nowrap;">I</div>
<div style="position:absolute;left:39px;top:546.5px;width:62px;height:62px;background:#2a2ec8;transform:scaleY(1.12) rotate(45deg);border-radius:9px"></div>
<div style="position:absolute;left:-230.0px;width:600px;text-align:center;top:555.8px;font-size:38px;line-height:1;color:#ffffff;font-weight:700;font-style:normal;letter-spacing:0px;white-space:nowrap;">B</div>
<div style="position:absolute;left:35px;top:702px;width:70px;height:70px;background:#156b83;border-radius:18px 6px 18px 0"></div>
<div style="position:absolute;left:-230.0px;width:600px;text-align:center;top:713.6px;font-size:40px;line-height:1;color:#9aa0b6;font-weight:700;font-style:normal;letter-spacing:0px;white-space:nowrap;">A</div>
<div style="position:absolute;left:35px;top:863px;width:70px;height:70px;background:#135479;border-radius:18px 6px 18px 0"></div>
<div style="position:absolute;left:-230.0px;width:600px;text-align:center;top:874.6px;font-size:40px;line-height:1;color:#9aa0b6;font-weight:700;font-style:normal;letter-spacing:0px;white-space:nowrap;">W</div>
<svg style="position:absolute;left:40px;top:1000px;overflow:visible" width="60" height="60" viewBox="40 1000 60 60" fill="none" stroke="#ffffff" stroke-width="4" stroke-linecap="round" stroke-linejoin="round"><path d="M70,1011 V1045 M53,1028 H87" stroke-linecap="butt"/></svg>
<svg style="position:absolute;left:0px;top:0px;overflow:visible" width="3456" height="2160" viewBox="0 0 3456 2160" fill="none" stroke="#151515" stroke-width="3.6" stroke-linecap="round" stroke-linejoin="round"><circle cx="707" cy="243" r="16"/><path d="M718.5,254.5 L731,267"/></svg>
<svg style="position:absolute;left:0px;top:0px;overflow:visible" width="3456" height="2160" viewBox="0 0 3456 2160" fill="none" stroke="#151515" stroke-width="3.6" stroke-linecap="round" stroke-linejoin="round"><path d="M197.5,400 H237.5 Q240.5,400 240.5,396 C240.5,378 230.5,365.8 217.5,365.8 C204.5,365.8 194.5,378 194.5,396 Q194.5,400 197.5,400 Z"/><circle cx="217" cy="391.5" r="3.8"/><path d="M219,387.5 L224,373"/></svg>
<svg style="position:absolute;left:0px;top:0px;overflow:visible" width="3456" height="2160" viewBox="0 0 3456 2160" fill="none" stroke="#151515" stroke-width="0.5" stroke-linecap="round" stroke-linejoin="round"><circle cx="200.5" cy="389" r="1.6" fill="#151515"/><circle cx="205.5" cy="376.5" r="1.6" fill="#151515"/><circle cx="217" cy="370.5" r="1.6" fill="#151515"/><circle cx="229.5" cy="376" r="1.6" fill="#151515"/><circle cx="234" cy="389" r="1.6" fill="#151515"/></svg>
<svg style="position:absolute;left:0px;top:0px;overflow:visible" width="3456" height="2160" viewBox="0 0 3456 2160" fill="none" stroke="#151515" stroke-width="3.3" stroke-linecap="round" stroke-linejoin="round"><path d="M206,494 H229 C230,505 231,512 227,517 C223,522 212,522 208,517 C204,512 205,505 206,494 Z"/><path d="M217.5,521 V535 M209.5,536 H225.5"/><path d="M218.5,496 L213.5,505 L221,511.5"/></svg>
<svg style="position:absolute;left:0px;top:0px;overflow:visible" width="3456" height="2160" viewBox="0 0 3456 2160" fill="none" stroke="#151515" stroke-width="2.7" stroke-linecap="round" stroke-linejoin="round"><path d="M722,524 L736.5,509.5 L751,524"/></svg>
<svg style="position:absolute;left:0px;top:0px;overflow:visible" width="3456" height="2160" viewBox="0 0 3456 2160" fill="none" stroke="#151515" stroke-width="2.7" stroke-linecap="round" stroke-linejoin="round"><path d="M722,930 L736.5,945 L751,930"/></svg>
<svg style="position:absolute;left:0px;top:0px;overflow:visible" width="3456" height="2160" viewBox="0 0 3456 2160" fill="none" stroke="#151515" stroke-width="2.7" stroke-linecap="round" stroke-linejoin="round"><path d="M722,1062 L736.5,1077 L751,1062"/></svg>
<svg style="position:absolute;left:0px;top:0px;overflow:visible" width="3456" height="2160" viewBox="0 0 3456 2160" fill="none" stroke="#151515" stroke-width="2.7" stroke-linecap="round" stroke-linejoin="round"><path d="M722,1194 L736.5,1209 L751,1194"/></svg>
<svg style="position:absolute;left:0px;top:0px;overflow:visible" width="3456" height="2160" viewBox="0 0 3456 2160" fill="none" stroke="#151515" stroke-width="2.7" stroke-linecap="round" stroke-linejoin="round"><path d="M722,1326 L736.5,1341 L751,1326"/></svg>
<svg style="position:absolute;left:0px;top:0px;overflow:visible" width="3456" height="2160" viewBox="0 0 3456 2160" fill="none" stroke="#151515" stroke-width="2.7" stroke-linecap="round" stroke-linejoin="round"><path d="M722,1458 L736.5,1473 L751,1458"/></svg>
<svg style="position:absolute;left:0px;top:0px;overflow:visible" width="3456" height="2160" viewBox="0 0 3456 2160" fill="none" stroke="#151515" stroke-width="2.7" stroke-linecap="round" stroke-linejoin="round"><path d="M722,1590 L736.5,1605 L751,1590"/></svg>
<svg style="position:absolute;left:0px;top:0px;overflow:visible" width="3456" height="2160" viewBox="0 0 3456 2160" fill="none" stroke="#151515" stroke-width="2.7" stroke-linecap="round" stroke-linejoin="round"><path d="M722,1722 L736.5,1737 L751,1722"/></svg>
<svg style="position:absolute;left:0px;top:0px;overflow:visible" width="3456" height="2160" viewBox="0 0 3456 2160" fill="none" stroke="#151515" stroke-width="2.7" stroke-linecap="round" stroke-linejoin="round"><path d="M722,1854 L736.5,1869 L751,1854"/></svg>
<svg style="position:absolute;left:0px;top:0px;overflow:visible" width="3456" height="2160" viewBox="0 0 3456 2160" fill="none" stroke="#151515" stroke-width="3.3" stroke-linecap="round" stroke-linejoin="round"><path d="M200,944 H237 A1,1 0 0 1 238,945 V952 A1,1 0 0 1 237,953 H200 A1,1 0 0 1 199,952 V945 A1,1 0 0 1 200,944 Z"/><path d="M203,944 L205,926 A5,5 0 0 1 210,921 H227 A5,5 0 0 1 232,926 L234,944"/><path d="M211,927 L209,944"/><path d="M191,929.5 H197.5 M193.5,915.5 L200,919 M239,929.5 H245.5 M243,915.5 L236.5,919"/></svg>
<svg style="position:absolute;left:0px;top:0px;overflow:visible" width="3456" height="2160" viewBox="0 0 3456 2160" fill="none" stroke="#151515" stroke-width="3.2" stroke-linecap="round" stroke-linejoin="round"><path d="M207.5,1090 V1068 A7.5,7.5 0 0 1 222.5,1068 V1090 Z"/><circle cx="211" cy="1050.5" r="3.2"/><path d="M214.5,1053 L215,1060"/><path d="M214.5,1052.5 L222,1053 L236.5,1050 V1059 L222,1057"/><path d="M199,1062 C201,1054 206,1050 208,1050"/></svg>
<svg style="position:absolute;left:180px;top:1170px;overflow:visible" width="80" height="60" viewBox="180 1170 80 60" fill="none" stroke="#151515" stroke-width="3.3" stroke-linecap="round" stroke-linejoin="round"><path d="M191.5,1223 V1190 L218,1180 L245,1190 V1223"/><path d="M200,1223 V1200.5 H219.5 V1223 Z M200,1211 H236 V1223 H219.5"/></svg>
<svg style="position:absolute;left:0px;top:0px;overflow:visible" width="3456" height="2160" viewBox="0 0 3456 2160" fill="none" stroke="#151515" stroke-width="3.3" stroke-linecap="round" stroke-linejoin="round"><path d="M196,1318 H239 A3,3 0 0 1 242,1321 V1328.5 A4,4 0 0 0 242,1336.5 V1345 A3,3 0 0 1 239,1348 H196 A3,3 0 0 1 193,1345 V1336.5 A4,4 0 0 0 193,1328.5 V1321 A3,3 0 0 1 196,1318 Z"/></svg>
<svg style="position:absolute;left:0px;top:0px;overflow:visible" width="3456" height="2160" viewBox="0 0 3456 2160" fill="none" stroke="#151515" stroke-width="3.3" stroke-linecap="round" stroke-linejoin="round"><path d="M204,1443.5 H222 L233.5,1455 V1483 A3,3 0 0 1 230.5,1486 H204 A3,3 0 0 1 201,1483 V1446.5 A3,3 0 0 1 204,1443.5 Z"/><path d="M221.5,1444 V1454.5 H233"/></svg>
<svg style="position:absolute;left:0px;top:0px;overflow:visible" width="3456" height="2160" viewBox="0 0 3456 2160" fill="none" stroke="#151515" stroke-width="3.3" stroke-linecap="round" stroke-linejoin="round"><path d="M197,1615 H239 A3,3 0 0 0 242,1612 C243,1592 232,1579 218,1579 C204,1579 193,1592 194,1612 A3,3 0 0 0 197,1615 Z"/><circle cx="217.5" cy="1605" r="3.8"/><path d="M219,1601 L224.5,1587"/></svg>
<svg style="position:absolute;left:0px;top:0px;overflow:visible" width="3456" height="2160" viewBox="0 0 3456 2160" fill="none" stroke="#151515" stroke-width="3" stroke-linecap="round" stroke-linejoin="round"><path d="M204,1707 H222 L234,1719 V1748 A3,3 0 0 1 231,1751 H204 A3,3 0 0 1 201,1748 V1710 A3,3 0 0 1 204,1707 Z"/><path d="M221.5,1707.5 V1719 H233.5"/><path d="M216,1728 A9,9 0 1 0 225,1737 H216 Z"/><path d="M219,1725 A9,9 0 0 1 228,1734 H219 Z"/></svg>
<svg style="position:absolute;left:0px;top:0px;overflow:visible" width="3456" height="2160" viewBox="0 0 3456 2160" fill="none" stroke="#151515" stroke-width="3.3" stroke-linecap="round" stroke-linejoin="round"><rect x="191" y="1847.5" width="54.5" height="27" rx="4"/></svg>
<svg style="position:absolute;left:0px;top:0px;overflow:visible" width="3456" height="2160" viewBox="0 0 3456 2160" fill="none" stroke="#151515" stroke-width="2.8" stroke-linecap="round" stroke-linejoin="round"><rect x="916.5" y="225.5" width="42" height="37" rx="4.5"/><circle cx="926.2" cy="235.5" r="1.6" fill="#151515"/><circle cx="926.2" cy="244" r="1.6" fill="#151515"/><circle cx="926.2" cy="252.6" r="1.6" fill="#151515"/><path d="M933,235.5 H951.3 M933,244 H951.3 M933,252.6 H951.3"/></svg>
<svg style="position:absolute;left:0px;top:0px;overflow:visible" width="3456" height="2160" viewBox="0 0 3456 2160" fill="none" stroke="#151515" stroke-width="3" stroke-linecap="round" stroke-linejoin="round"><path d="M2255,231.5 H2292.5"/><path d="M2265,231 C2265,224 2281,224 2281,231"/><path d="M2258,232 L2259.5,264 A4,4 0 0 0 2263.5,268 H2283.5 A4,4 0 0 0 2287.5,264 L2289,232"/><path d="M2266.5,238 V262 M2273.5,238 V262 M2280.5,238 V262"/></svg>
<svg style="position:absolute;left:0px;top:0px;overflow:visible" width="3456" height="2160" viewBox="0 0 3456 2160" fill="none" stroke="#ffffff" stroke-width="3" stroke-linecap="round" stroke-linejoin="round"><path d="M2390,228.5 H2414 L2423.5,238 V262.5 A4,4 0 0 1 2419.5,266.5 H2390 A3,3 0 0 1 2387,263.5 V231.5 A3,3 0 0 1 2390,228.5 Z"/><path d="M2392.5,229 V241.5 H2412 V229"/><circle cx="2405" cy="252.5" r="6.3"/></svg>
<svg style="position:absolute;left:0px;top:0px;overflow:visible" width="3456" height="2160" viewBox="0 0 3456 2160" fill="none" stroke="#d6d6d6" stroke-width="2" stroke-linecap="round" stroke-linejoin="round"><rect x="2624" y="472" width="30" height="36" rx="3"/><path d="M2633,472 V469 H2645 V472"/><circle cx="2639" cy="467" r="2"/><path d="M2632,484 H2634 M2638,484 H2646 M2632,492 H2634 M2638,492 H2646"/></svg>
<svg style="position:absolute;left:0px;top:0px;overflow:visible" width="3456" height="2160" viewBox="0 0 3456 2160" fill="none" stroke="#666666" stroke-width="2.6" stroke-linecap="round" stroke-linejoin="round"><circle cx="2596.3" cy="750" r="20"/><circle cx="2596.3" cy="740.2" r="2.2" fill="#666"/><path d="M2592.5,746.5 H2597 V760 M2592,760.5 H2601.5" stroke-linecap="butt" stroke-linejoin="miter"/></svg>
<svg style="position:absolute;left:0px;top:0px;overflow:visible" width="3456" height="2160" viewBox="0 0 3456 2160" fill="none" stroke="#666666" stroke-width="2.6" stroke-linecap="round" stroke-linejoin="round"><path d="M1879,1804 H1916 M1906,1795 L1916,1804 L1906,1813"/></svg>
<svg style="position:absolute;left:0px;top:0px;overflow:visible" width="3456" height="2160" viewBox="0 0 3456 2160" fill="none" stroke="#6b6b6b" stroke-width="2.3" stroke-linecap="round" stroke-linejoin="round"><path d="M2575.4,1934 L2583,1941 H2567.8 Z M2575.4,1941 V1963 M2567.8,1963 H2583 L2575.4,1970 Z M2590.5,1940.8 H2622.5 M2590.5,1952 H2622.5 M2590.5,1963.2 H2622.5"/></svg>
<svg style="position:absolute;left:0px;top:0px;overflow:visible" width="3456" height="2160" viewBox="0 0 3456 2160" fill="none" stroke="#151515" stroke-width="3.2" stroke-linecap="round" stroke-linejoin="round"><path d="M3243,241 L3253.5,252 L3264,241"/></svg>
<svg style="position:absolute;left:0px;top:0px;overflow:visible" width="3456" height="2160" viewBox="0 0 3456 2160" fill="none" stroke="#2329c5" stroke-width="3.2" stroke-linecap="round" stroke-linejoin="round"><path d="M3378,227 L3384.3,240.5 L3399.3,242.3 L3388.3,252.5 L3391.2,267.3 L3378,260 L3364.8,267.3 L3367.7,252.5 L3356.7,242.3 L3371.7,240.5 Z"/></svg>
<svg style="position:absolute;left:0px;top:0px;overflow:visible" width="3456" height="2160" viewBox="0 0 3456 2160" fill="none" stroke="#151515" stroke-width="3.4" stroke-linecap="round" stroke-linejoin="round"><circle cx="3362" cy="362" r="16"/><path d="M3373.5,373.5 L3390,389.5"/></svg>
<svg style="position:absolute;left:0px;top:0px;overflow:visible" width="3456" height="2160" viewBox="0 0 3456 2160" fill="none" stroke="#151515" stroke-width="3.2" stroke-linecap="round" stroke-linejoin="round"><path d="M2786,472 C2778,466 2779,455 2787,451 C2795,446 2809,447 2815,454 C2821,461 2817,472 2806,475 C2800,477 2793,477 2789,475 L2781.5,479 Z"/><path d="M2817,459.5 C2827,462 2832,470 2828.5,478 L2830.5,487.5 L2821.5,484.5 C2813,487 2803,485 2798,479"/></svg>
<svg style="position:absolute;left:0px;top:0px;overflow:visible" width="3456" height="2160" viewBox="0 0 3456 2160" fill="none" stroke="#151515" stroke-width="3.2" stroke-linecap="round" stroke-linejoin="round"><rect x="2789.5" y="553.5" width="32" height="37" rx="3"/><path d="M2798,553 H2813"/><circle cx="2805.5" cy="549.5" r="3"/><path d="M2798,568.5 H2798.3 M2798,577.3 H2798.3 M2804,568.5 H2813 M2804,577.3 H2813"/></svg>
<svg style="position:absolute;left:0px;top:0px;overflow:visible" width="3456" height="2160" viewBox="0 0 3456 2160" fill="none" stroke="#151515" stroke-width="3.2" stroke-linecap="round" stroke-linejoin="round"><path d="M2792.5,648 H2810 L2821.5,659.5 V687.5 A3,3 0 0 1 2818.5,690.5 H2792.5 A3,3 0 0 1 2789.5,687.5 V651 A3,3 0 0 1 2792.5,648 Z"/><path d="M2809.5,648.5 V660 H2821"/><path d="M2795.5,683.5 C2801,678 2805,669 2805.5,662 C2805.5,659 2802.5,659 2803,662.5 C2804,670 2810,677 2817,678.5 C2819.5,679 2819.5,675.5 2816.5,675.5 C2808,675.5 2800,679 2795.5,683.5 Z" stroke-width="2.2"/></svg>
<svg style="position:absolute;left:0px;top:0px;overflow:visible" width="3456" height="2160" viewBox="0 0 3456 2160" fill="none" stroke="#151515" stroke-width="3.2" stroke-linecap="round" stroke-linejoin="round"><path d="M2795,765.5 V750 A3,3 0 0 1 2798,747 H2815 L2827,759 V787.5 A3,3 0 0 1 2824,790.5 H2798 A3,3 0 0 1 2795,787.5 V777.5"/><path d="M2814.5,747.5 V759.5 H2826.5"/><path d="M2783,773 H2806"/><path d="M2807.5,766 L2815.5,773 L2807.5,780 Z"/></svg>
<svg style="position:absolute;left:0px;top:0px;overflow:visible" width="3456" height="2160" viewBox="0 0 3456 2160" fill="none" stroke="#151515" stroke-width="3.2" stroke-linecap="round" stroke-linejoin="round"><path d="M2792.5,848 H2810 L2821.5,859.5 V887.5 A3,3 0 0 1 2818.5,890.5 H2792.5 A3,3 0 0 1 2789.5,887.5 V851 A3,3 0 0 1 2792.5,848 Z"/><path d="M2809.5,848.5 V860 H2821"/><path d="M2797.5,867.5 H2813 M2797.5,873 H2813 M2797.5,878.5 H2813"/></svg>
<svg style="position:absolute;left:0px;top:0px;overflow:visible" width="3456" height="2160" viewBox="0 0 3456 2160" fill="none" stroke="#151515" stroke-width="3.2" stroke-linecap="round" stroke-linejoin="round"><path d="M2792.5,948 H2810 L2821.5,959.5 V987.5 A3,3 0 0 1 2818.5,990.5 H2792.5 A3,3 0 0 1 2789.5,987.5 V951 A3,3 0 0 1 2792.5,948 Z"/><path d="M2809.5,948.5 V960 H2821"/><path d="M2797.5,967.5 H2813 M2797.5,973 H2813 M2797.5,978.5 H2813"/></svg>
<svg style="position:absolute;left:0px;top:0px;overflow:visible" width="3456" height="2160" viewBox="0 0 3456 2160" fill="none" stroke="#151515" stroke-width="3.2" stroke-linecap="round" stroke-linejoin="round"><path d="M2792.5,1148 H2810 L2821.5,1159.5 V1187.5 A3,3 0 0 1 2818.5,1190.5 H2792.5 A3,3 0 0 1 2789.5,1187.5 V1151 A3,3 0 0 1 2792.5,1148 Z"/><path d="M2809.5,1148.5 V1160 H2821"/><path d="M2797.5,1167.5 H2813 M2797.5,1173 H2813 M2797.5,1178.5 H2813"/></svg>
<svg style="position:absolute;left:0px;top:0px;overflow:visible" width="3456" height="2160" viewBox="0 0 3456 2160" fill="none" stroke="#151515" stroke-width="3.2" stroke-linecap="round" stroke-linejoin="round"><path d="M2805.5,1052.0 A5.2,5.2 0 0 1 2817.5,1057.0 A5.2,5.2 0 0 1 2822.5,1069.0 A5.2,5.2 0 0 1 2817.5,1081.0 A5.2,5.2 0 0 1 2805.5,1086.0 A5.2,5.2 0 0 1 2793.5,1081.0 A5.2,5.2 0 0 1 2788.5,1069.0 A5.2,5.2 0 0 1 2793.5,1057.0 A5.2,5.2 0 0 1 2805.5,1052.0 Z"/><path d="M2797.5,1069.5 L2803,1075 L2814,1064"/></svg>
<svg style="position:absolute;left:0px;top:0px;overflow:visible" width="3456" height="2160" viewBox="0 0 3456 2160" fill="none" stroke="#151515" stroke-width="3.2" stroke-linecap="round" stroke-linejoin="round"><path d="M2789.5,1261 A18.5,18.5 0 1 1 2791,1280"/><path d="M2785,1254 V1263.5 H2794.5"/><path d="M2805,1257 V1268 L2812.5,1275.5"/></svg>
<svg style="position:absolute;left:0px;top:0px;overflow:visible" width="3456" height="2160" viewBox="0 0 3456 2160" fill="none" stroke="#151515" stroke-width="3.4" stroke-linecap="round" stroke-linejoin="round"><circle cx="2805.5" cy="1404.5" r="19.8"/><path d="M2798.5,1398.0 A7.2,7.2 0 1 1 2807.8,1405.0 C2806,1406.1 2805.5,1407.5 2805.5,1410.5"/><circle cx="2805.5" cy="1416.0" r="1.2" fill="#151515"/></svg>
<svg style="position:absolute;left:0px;top:0px;overflow:visible" width="3456" height="2160" viewBox="0 0 3456 2160" fill="none" stroke="#151515" stroke-width="3.4" stroke-linecap="round" stroke-linejoin="round"><circle cx="2805.5" cy="1577" r="19.8"/><path d="M2798.5,1570.5 A7.2,7.2 0 1 1 2807.8,1577.5 C2806,1578.6 2805.5,1580 2805.5,1583"/><circle cx="2805.5" cy="1588.5" r="1.2" fill="#151515"/></svg>
<svg style="position:absolute;left:0px;top:0px;overflow:visible" width="3456" height="2160" viewBox="0 0 3456 2160" fill="none" stroke="#151515" stroke-width="3.4" stroke-linecap="round" stroke-linejoin="round"><circle cx="2805.5" cy="1749" r="19.8"/><path d="M2798.5,1742.5 A7.2,7.2 0 1 1 2807.8,1749.5 C2806,1750.6 2805.5,1752 2805.5,1755"/><circle cx="2805.5" cy="1760.5" r="1.2" fill="#151515"/></svg>
<svg style="position:absolute;left:0px;top:0px;overflow:visible" width="3456" height="2160" viewBox="0 0 3456 2160" fill="none" stroke="#151515" stroke-width="3.2" stroke-linecap="round" stroke-linejoin="round"><path d="M2805,2092 L2786,2110.5 L2805,2129"/></svg>
<svg style="position:absolute;left:0px;top:0px;overflow:visible" width="3456" height="2160" viewBox="0 0 3456 2160" fill="none" stroke="#151515" stroke-width="3.2" stroke-linecap="round" stroke-linejoin="round"><path d="M3389,2092 L3408,2110.5 L3389,2129"/></svg>
</body></html>
